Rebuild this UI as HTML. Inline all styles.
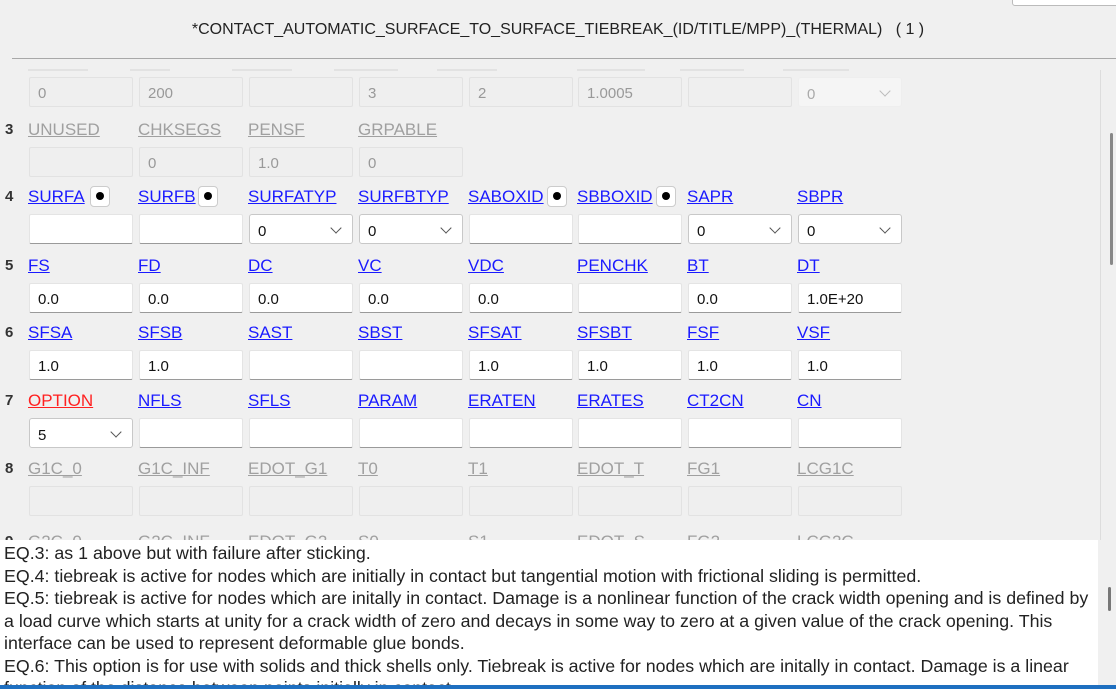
<!DOCTYPE html>
<html><head><meta charset="utf-8"><style>
*{box-sizing:border-box;margin:0;padding:0}
body{width:1116px;height:689px;overflow:hidden;background:#f0f0f0;font-family:"Liberation Sans","DejaVu Sans",sans-serif;position:relative;color:#222}
.a{position:absolute}
.t{font-size:16px;top:21px;left:0;width:1116px;text-align:center;color:#222}
.hr{left:12px;top:58px;width:1104px;height:1px;background:#a8a8a8}
.n{font-size:15px;font-weight:bold;left:5px;color:#333}
.l{font-size:17px;text-decoration:underline;color:#1a1aff;white-space:nowrap}
.g{color:#a0a0a0}
.r{color:#ff2020}
.i{width:104px;height:30px;background:#fff;border:1px solid #e4e4e4;border-bottom:1px solid #9a9a9a;border-radius:2px;font-size:15px;padding:7px 0 0 8px;color:#111}
.d{background:#efefef;border:1px solid #e2e2e2;color:#999}
.s{border:1px solid #c8c8c8;border-radius:3px;padding-top:8px}
.s:after{content:"";position:absolute;right:12px;top:9px;width:7px;height:7px;border-right:1.3px solid #555;border-bottom:1.3px solid #555;transform:rotate(45deg)}
.sd{background:#f5f5f5;border:1px solid #eee;color:#aaa}
.sd:after{border-color:#bbb}
.b{width:20px;height:21px;background:#fff;border:1px solid #ccc;border-radius:4px}
.b:after{content:"";position:absolute;left:5px;top:5px;width:8px;height:8px;border-radius:50%;background:#000}
.hl{height:2px;background:#e2e2e2;top:69px}
.txt{left:0;top:540px;width:1098px;height:146px;background:#fff;font-size:17.8px;line-height:22.5px;padding:2px 0 0 4px;color:#222;overflow:hidden;white-space:nowrap}
</style></head><body>
<div class="a" style="left:1012px;top:-4px;width:110px;height:10px;background:#fff;border:1px solid #bbb;border-radius:3px"></div>
<div class="a t">*CONTACT_AUTOMATIC_SURFACE_TO_SURFACE_TIEBREAK_(ID/TITLE/MPP)_(THERMAL) &nbsp; ( 1 )</div>
<div class="a hr"></div>
<div class="a" style="left:1100px;top:70px;width:1px;height:470px;background:#ddd"></div>
<div class="a" style="left:1110px;top:133px;width:3px;height:132px;background:#888;border-radius:2px"></div>

<div class="a hl" style="left:28px;width:60px"></div><div class="a hl" style="left:130px;width:40px"></div><div class="a hl" style="left:232px;width:60px"></div><div class="a hl" style="left:334px;width:64px"></div><div class="a hl" style="left:437px;width:60px"></div><div class="a hl" style="left:577px;width:68px"></div><div class="a hl" style="left:680px;width:64px"></div><div class="a hl" style="left:783px;width:66px"></div>

<div class="a i d" style="left:29px;top:77px">0</div>
<div class="a i d" style="left:139px;top:77px">200</div>
<div class="a i d" style="left:249px;top:77px"></div>
<div class="a i d" style="left:359px;top:77px">3</div>
<div class="a i d" style="left:469px;top:77px">2</div>
<div class="a i d" style="left:578px;top:77px">1.0005</div>
<div class="a i d" style="left:688px;top:77px"></div>
<div class="a i s sd" style="left:798px;top:77px">0</div>

<div class="a n" style="top:121px">3</div>
<div class="a l g" style="left:28px;top:120px">UNUSED</div>
<div class="a l g" style="left:138px;top:120px">CHKSEGS</div>
<div class="a l g" style="left:248px;top:120px">PENSF</div>
<div class="a l g" style="left:358px;top:120px">GRPABLE</div>
<div class="a i d" style="left:29px;top:147px"></div>
<div class="a i d" style="left:139px;top:147px">0</div>
<div class="a i d" style="left:249px;top:147px">1.0</div>
<div class="a i d" style="left:359px;top:147px">0</div>

<div class="a n" style="top:188px">4</div>
<div class="a l" style="left:28px;top:187px">SURFA</div><div class="a b" style="left:90px;top:186px"></div>
<div class="a l" style="left:138px;top:187px">SURFB</div><div class="a b" style="left:198px;top:186px"></div>
<div class="a l" style="left:248px;top:187px">SURFATYP</div>
<div class="a l" style="left:358px;top:187px">SURFBTYP</div>
<div class="a l" style="left:468px;top:187px">SABOXID</div><div class="a b" style="left:547px;top:186px"></div>
<div class="a l" style="left:577px;top:187px">SBBOXID</div><div class="a b" style="left:656px;top:186px"></div>
<div class="a l" style="left:687px;top:187px">SAPR</div>
<div class="a l" style="left:797px;top:187px">SBPR</div>
<div class="a i" style="left:29px;top:214px"></div>
<div class="a i" style="left:139px;top:214px"></div>
<div class="a i s" style="left:249px;top:214px">0</div>
<div class="a i s" style="left:359px;top:214px">0</div>
<div class="a i" style="left:469px;top:214px"></div>
<div class="a i" style="left:578px;top:214px"></div>
<div class="a i s" style="left:688px;top:214px">0</div>
<div class="a i s" style="left:798px;top:214px">0</div>

<div class="a n" style="top:257px">5</div>
<div class="a l" style="left:28px;top:256px">FS</div>
<div class="a l" style="left:138px;top:256px">FD</div>
<div class="a l" style="left:248px;top:256px">DC</div>
<div class="a l" style="left:358px;top:256px">VC</div>
<div class="a l" style="left:468px;top:256px">VDC</div>
<div class="a l" style="left:577px;top:256px">PENCHK</div>
<div class="a l" style="left:687px;top:256px">BT</div>
<div class="a l" style="left:797px;top:256px">DT</div>
<div class="a i" style="left:29px;top:283px">0.0</div>
<div class="a i" style="left:139px;top:283px">0.0</div>
<div class="a i" style="left:249px;top:283px">0.0</div>
<div class="a i" style="left:359px;top:283px">0.0</div>
<div class="a i" style="left:469px;top:283px">0.0</div>
<div class="a i" style="left:578px;top:283px"></div>
<div class="a i" style="left:688px;top:283px">0.0</div>
<div class="a i" style="left:798px;top:283px">1.0E+20</div>

<div class="a n" style="top:324px">6</div>
<div class="a l" style="left:28px;top:323px">SFSA</div>
<div class="a l" style="left:138px;top:323px">SFSB</div>
<div class="a l" style="left:248px;top:323px">SAST</div>
<div class="a l" style="left:358px;top:323px">SBST</div>
<div class="a l" style="left:468px;top:323px">SFSAT</div>
<div class="a l" style="left:577px;top:323px">SFSBT</div>
<div class="a l" style="left:687px;top:323px">FSF</div>
<div class="a l" style="left:797px;top:323px">VSF</div>
<div class="a i" style="left:29px;top:350px">1.0</div>
<div class="a i" style="left:139px;top:350px">1.0</div>
<div class="a i" style="left:249px;top:350px"></div>
<div class="a i" style="left:359px;top:350px"></div>
<div class="a i" style="left:469px;top:350px">1.0</div>
<div class="a i" style="left:578px;top:350px">1.0</div>
<div class="a i" style="left:688px;top:350px">1.0</div>
<div class="a i" style="left:798px;top:350px">1.0</div>

<div class="a n" style="top:392px">7</div>
<div class="a l r" style="left:28px;top:391px">OPTION</div>
<div class="a l" style="left:138px;top:391px">NFLS</div>
<div class="a l" style="left:248px;top:391px">SFLS</div>
<div class="a l" style="left:358px;top:391px">PARAM</div>
<div class="a l" style="left:468px;top:391px">ERATEN</div>
<div class="a l" style="left:577px;top:391px">ERATES</div>
<div class="a l" style="left:687px;top:391px">CT2CN</div>
<div class="a l" style="left:797px;top:391px">CN</div>
<div class="a i s" style="left:29px;top:418px">5</div>
<div class="a i" style="left:139px;top:418px"></div>
<div class="a i" style="left:249px;top:418px"></div>
<div class="a i" style="left:359px;top:418px"></div>
<div class="a i" style="left:469px;top:418px"></div>
<div class="a i" style="left:578px;top:418px"></div>
<div class="a i" style="left:688px;top:418px"></div>
<div class="a i" style="left:798px;top:418px"></div>

<div class="a n" style="top:460px">8</div>
<div class="a l g" style="left:28px;top:459px">G1C_0</div>
<div class="a l g" style="left:138px;top:459px">G1C_INF</div>
<div class="a l g" style="left:248px;top:459px">EDOT_G1</div>
<div class="a l g" style="left:358px;top:459px">T0</div>
<div class="a l g" style="left:468px;top:459px">T1</div>
<div class="a l g" style="left:577px;top:459px">EDOT_T</div>
<div class="a l g" style="left:687px;top:459px">FG1</div>
<div class="a l g" style="left:797px;top:459px">LCG1C</div>
<div class="a i d" style="left:29px;top:486px"></div>
<div class="a i d" style="left:139px;top:486px"></div>
<div class="a i d" style="left:249px;top:486px"></div>
<div class="a i d" style="left:359px;top:486px"></div>
<div class="a i d" style="left:469px;top:486px"></div>
<div class="a i d" style="left:578px;top:486px"></div>
<div class="a i d" style="left:688px;top:486px"></div>
<div class="a i d" style="left:798px;top:486px"></div>
<div class="a n" style="top:533px">9</div>
<div class="a l g" style="left:28px;top:532px">G2C_0</div>
<div class="a l g" style="left:138px;top:532px">G2C_INF</div>
<div class="a l g" style="left:248px;top:532px">EDOT_G2</div>
<div class="a l g" style="left:358px;top:532px">S0</div>
<div class="a l g" style="left:468px;top:532px">S1</div>
<div class="a l g" style="left:577px;top:532px">EDOT_S</div>
<div class="a l g" style="left:687px;top:532px">FG2</div>
<div class="a l g" style="left:797px;top:532px">LCG2C</div>

<div class="a txt">EQ.3: as 1 above but with failure after sticking.<br>EQ.4: tiebreak is active for nodes which are initially in contact but tangential motion with frictional sliding is permitted.<br>EQ.5: tiebreak is active for nodes which are initally in contact. Damage is a nonlinear function of the crack width opening and is defined by<br>a load curve which starts at unity for a crack width of zero and decays in some way to zero at a given value of the crack opening. This<br>interface can be used to represent deformable glue bonds.<br>EQ.6: This option is for use with solids and thick shells only. Tiebreak is active for nodes which are initally in contact. Damage is a linear<br>function of the distance between points initially in contact.</div>
<div class="a" style="left:1098px;top:540px;width:18px;height:146px;background:#f0f0f0"></div>
<div class="a" style="left:1108px;top:587px;width:3px;height:24px;background:#777;border-radius:2px"></div>
<div class="a" style="left:0;top:685px;width:1116px;height:4px;background:#1e6fc0"></div>
</body></html>
